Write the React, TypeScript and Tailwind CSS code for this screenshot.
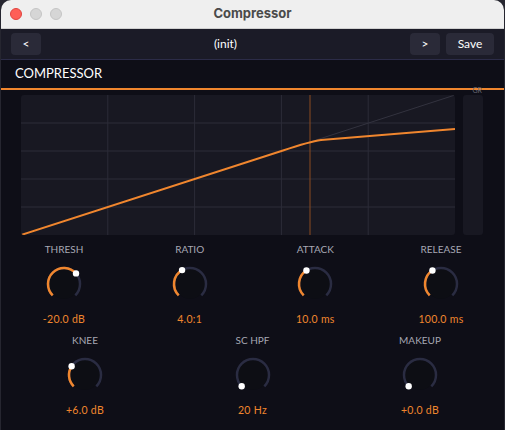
import React from "react";

const ORANGE = "#f0862e";

function Knob({ frac, bipolar }: { frac: number; bipolar?: boolean }) {
  const r = 16, cx = 20, cy = 20;
  const pt = (deg: number) => {
    const a = (deg * Math.PI) / 180;
    return [cx + r * Math.cos(a), cy + r * Math.sin(a)];
  };
  const arc = (a0: number, a1: number) => {
    const [x0, y0] = pt(a0);
    const [x1, y1] = pt(a1);
    const large = a1 - a0 > 180 ? 1 : 0;
    return `M${x0} ${y0} A${r} ${r} 0 ${large} 1 ${x1} ${y1}`;
  };
  const end = 135 + 270 * frac;
  const [dx, dy] = pt(end);
  return (
    <svg width="40" height="40" viewBox="0 0 40 40">
      <circle cx={cx} cy={cy} r={15} fill="#0d0e14" />
      <path d={arc(135, 405)} stroke="#2a2c42" strokeWidth="2.5" fill="none" />
      {frac > 0.001 && !bipolar && <path d={arc(135, end)} stroke={ORANGE} strokeWidth="2.5" fill="none" />}
      <circle cx={dx} cy={dy} r={3.2} fill="#fff" />
    </svg>
  );
}

function Ctl({ label, value, frac }: { label: string; value: string; frac: number }) {
  return (
    <div className="flex flex-col items-center w-[90px]">
      <div className="text-[10px] text-[#a6a8b4] leading-[12px] h-[12px]">{label}</div>
      <div className="mt-[9px]"><Knob frac={frac} /></div>
      <div className="text-[10.5px] text-[#f0862e] leading-[12px] mt-[9px] tracking-[0.3px]">{value}</div>
    </div>
  );
}

export default function App() {
  const W = 434, H = 140;
  return (
    <div className="w-[505px] h-[430px] bg-[#262630] overflow-hidden" style={{ fontFamily: "Lato, 'Open Sans', sans-serif" }}>
      <div className="mx-[1px] h-[430px] rounded-t-[10px] overflow-hidden bg-[#0e0e17] flex flex-col">
        <div className="h-[29px] bg-[#efefef] relative flex items-center justify-center border-b border-[#d0d0d0]">
          <div className="absolute left-[9px] top-[8px] flex gap-[8px]">
            <div className="w-[12px] h-[12px] rounded-full bg-[#fe5f57] border border-[#e0443e]" />
            <div className="w-[12px] h-[12px] rounded-full bg-[#d6d6d6] border border-[#c4c4c4]" />
            <div className="w-[12px] h-[12px] rounded-full bg-[#d6d6d6] border border-[#c4c4c4]" />
          </div>
          <div className="text-[13px] font-bold text-[#4a4a4a]" style={{ fontFamily: "Inter, sans-serif" }}>Compressor</div>
        </div>
        <div className="h-[31px] bg-[#1b1b27] border-b border-[#2c2c48] flex items-center px-[10px] relative">
          <div className="w-[30px] h-[22px] rounded bg-[#2a2a38] text-white text-[12px] flex items-center justify-center">&lt;</div>
          <div className="flex-1 text-center text-white text-[12px]">(init)</div>
          <div className="w-[30px] h-[22px] rounded bg-[#2a2a38] text-white text-[12px] flex items-center justify-center">&gt;</div>
          <div className="ml-[6px] w-[48px] h-[22px] rounded bg-[#2a2a38] text-white text-[12px] flex items-center justify-center">Save</div>
        </div>
        <div className="h-[28px] bg-[#0e0e17] flex items-center px-[14px] text-white text-[13px] relative">
          COMPRESSOR
          <div className="absolute right-[22px] top-[25px] text-[7px] text-[#666872]">GR</div>
        </div>
        <div className="h-[2px] bg-[#f0862e]" />
        <div className="flex px-[20px] pt-[5px] gap-[8px]">
          <svg width={W} height={H} className="rounded-[3px]">
            <rect width={W} height={H} fill="#181822" />
            {[1, 2, 3, 4].map(i => (
              <g key={i}>
                <line x1={(W * i) / 5} y1={0} x2={(W * i) / 5} y2={H} stroke="#2c2c38" />
                <line x1={0} y1={(H * i) / 5} x2={W} y2={(H * i) / 5} stroke="#2c2c38" />
              </g>
            ))}
            <line x1={289} y1={0} x2={289} y2={H} stroke="#8a4a20" />
            <line x1={289} y1={47} x2={W} y2={0} stroke="#33333f" />
            <path d="M0 140 L262 55.5 Q289 46.5 300 45 L434 34" stroke={ORANGE} strokeWidth="2" fill="none" />
          </svg>
          <div className="w-[20px] h-[140px] rounded-[3px] bg-[#181822]" />
        </div>
        <div className="flex justify-between px-[18px] mt-[8px]">
          <Ctl label="THRESH" value="-20.0 dB" frac={0.68} />
          <Ctl label="RATIO" value="4.0:1" frac={0.39} />
          <Ctl label="ATTACK" value="10.0 ms" frac={0.38} />
          <Ctl label="RELEASE" value="100.0 ms" frac={0.38} />
        </div>
        <div className="flex justify-between px-[39px] mt-[9px]">
          <Ctl label="KNEE" value="+6.0 dB" frac={0.29} />
          <Ctl label="SC HPF" value="20 Hz" frac={0} />
          <Ctl label="MAKEUP" value="+0.0 dB" frac={0} />
        </div>
      </div>
    </div>
  );
}
